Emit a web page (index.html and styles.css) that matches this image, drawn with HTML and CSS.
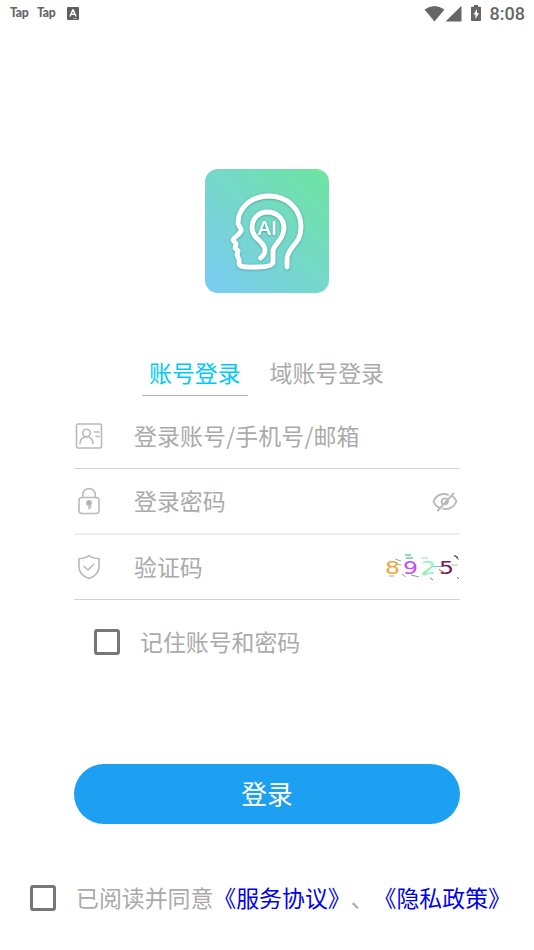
FILE: index.html
```html
<!DOCTYPE html>
<html lang="zh-CN">
<head>
<meta charset="utf-8">
<title>登录</title>
<link rel="stylesheet" href="styles.css">
</head>
<body>
<div class="screen">
  <header class="status">
    <div class="status-left">
      <span>Tap</span><span>Tap</span>
      <svg class="a-icon" width="12" height="13" viewBox="0 0 12 13"><rect width="12" height="13" rx="1" fill="#5f5f5f"/><path d="M3 9.500 5.700 3h.6L9 9.500M4 7.300h4" fill="none" stroke="#fff" stroke-width="1.400"/><path d="M6 11.500h4" stroke="#bbb" stroke-width=".8"/></svg>
    </div>
    <div class="status-right">
      <svg width="52" height="18" viewBox="0 0 52 18" fill="#666"><path d="M.5 4.500Q10.500-2.500 20.500 4.500L10.500 16.500Z"/><path d="M37.500.8V16.500H21.500Z"/></svg>
      <svg class="battery" width="10" height="17" viewBox="0 0 10 17"><path d="M3 0h4v1.700h2q1 0 1 1V15q0 1-1 1H1q-1 0-1-1V2.700q0-1 1-1h2Z" fill="#666"/><path d="M6 4 2.500 9.500h2V14L8 8H6Z" fill="#fff"/></svg>
      <span class="clock">8:08</span>
    </div>
  </header>

  <svg class="logo" width="124" height="124" viewBox="0 0 124 124">
    <defs>
      <linearGradient id="bg" x1="0" y1="1" x2="1" y2="0"><stop offset="0" stop-color="#79cbf4"/><stop offset=".5" stop-color="#76d8cb"/><stop offset="1" stop-color="#6ce5a0"/></linearGradient>
      <filter id="shade" x="-20%" y="-20%" width="140%" height="140%"><feDropShadow dx="0" dy=".5" stdDeviation="1.200" flood-color="#28786f" flood-opacity=".65"/></filter>
    </defs>
    <rect width="124" height="124" rx="13" fill="url(#bg)"/>
    <g fill="none" stroke="#fff" stroke-linecap="round" stroke-linejoin="round" filter="url(#shade)">
      <path stroke-width="4.800" d="M82 98V90C82 78 96 76 96 58C96 39 81 27 64 27C46 27 33 39 33 54C33 57 37 59 36 62C35 65 28 69 28 71C28 73 31 73 31 75L30 79L33 82L32 86C33 89 35 90 34 94C34 99 43 98 51 98C60 98 68 97 68 93V82C68 76 79 71 79 59C79 49 71 43 62.500 43C53 43 47 50 47 59C47 70 60 72 60 81C60 85 58 87 55.500 89"/>
    </g>
    <text x="62.500" y="65.500" text-anchor="middle" class="logo-text" filter="url(#shade)">AI</text>
  </svg>

  <nav class="tabs">
    <a class="tab active">账号登录</a>
    <a class="tab">域账号登录</a>
  </nav>

  <form class="form">
    <div class="row">
      <svg class="icon" width="30" height="30" viewBox="0 0 30 30"><rect x="2.500" y="3" width="25" height="24" rx="1.500"/><circle cx="12.500" cy="12" r="3.800"/><path d="M6 22.500C6 13.500 19 13.500 19 22.500M20.500 11H25M22 15.500h3"/></svg>
      <span class="label account">登录账号/手机号/邮箱</span>
    </div>
    <div class="row light">
      <svg class="icon" width="30" height="30" viewBox="0 0 30 30"><rect x="5" y="11.500" width="20" height="16" rx="3"/><path d="M8.700 11.500V9C8.700 .5 21.300 .5 21.300 9V11.500"/><circle cx="15" cy="17" r="2.200" fill="#aaa"/><path d="M15.300 18v5M15 21h2"/></svg>
      <span class="label">登录密码</span>
      <svg class="eye" width="28" height="24" viewBox="0 0 28 24"><path d="M17 4.700C9 2.500 4.500 7 2.500 11.500C3.500 14 5.500 16.500 8 17.500M21.500 6.500C24 8 25 10 25.500 11.500C23 17.500 17.500 20 12 18.700M22.500 3.500 7 20.500M15.500 8.600C11 7.500 9.500 11.500 11.500 14M17 11C17 13 16 14 14.500 14.300"/></svg>
    </div>
    <div class="row">
      <svg class="icon" width="30" height="30" viewBox="0 0 30 30"><path d="M15 3.500C12 6 8 6.500 5 6.500V15C5 21 9.500 24.500 15 26.500C20.500 24.500 25 21 25 15V6.500C22 6.500 18 6 15 3.500ZM10 14.500 14 18 20 12"/></svg>
      <span class="label">验证码</span>
      <svg class="captcha" width="76" height="28" viewBox="0 0 76 28" fill="none">
        <path d="M10 5l6 2M12 10l4 1M4 22h5" stroke="#6fc594"/><path d="M20 1h6M21 4h7" stroke="#69cb96" stroke-width="1.300"/><path d="M36 4h7M37 20l5 1" stroke="#8ee3be"/><path d="M17 20l4 3" stroke="#80a6ee"/><path d="M26 21l8 2" stroke="#68b39d"/><path d="M45 24l3 2" stroke="#a16be0"/><path d="M48 12.500h9" stroke="#65cad7"/><path d="M54 15.500l5 3" stroke="#a15a27"/><path d="M66 11h7" stroke="#9bd76e"/><path d="M69 1.500l4 2" stroke="#35298b" stroke-width="1.300"/><path d="M71 3.500l3 2M72 23l2 2" stroke="#647e8d"/>
        <g class="digits"><text x="0" y="20" textLength="15" lengthAdjust="spacingAndGlyphs" fill="#f4a340">8</text><text x="18" y="20" textLength="15" lengthAdjust="spacingAndGlyphs" fill="#c450ed">9</text><text x="36" y="20" textLength="15" lengthAdjust="spacingAndGlyphs" fill="#91f2b5">2</text><text x="54" y="20" textLength="15" lengthAdjust="spacingAndGlyphs" fill="#70204d">5</text></g>
      </svg>
    </div>
    <label class="remember"><span class="box"></span><span class="caption">记住账号和密码</span></label>
    <button class="submit" type="button">登录</button>
  </form>

  <footer class="agree"><span class="box"></span><span class="terms caption">已阅读并同意<a>《服务协议》</a>、<a>《隐私政策》</a></span></footer>
</div>
</body>
</html>
```

FILE: styles.css
```css
* { box-sizing: border-box; }
body {
  margin: 0;
  background: #fff;
  color: #aaa;
  font: 22.9px/34px "Noto Sans CJK SC", sans-serif;
  text-spacing-trim: space-all;
}
.screen { height: 950px; overflow: hidden; display: flex; flex-direction: column; }
.status {
  height: 27px;
  padding: 0 9px 0 10px;
  display: flex;
  justify-content: space-between;
  align-items: center;
  color: #666;
}
.status-left { display: flex; align-items: center; gap: 7px; font: 900 12.2px/24px Lato, sans-serif; letter-spacing: -.2px; }
.status-left span { width: 20px; padding-bottom: 2px; }
.a-icon { margin-left: 3px; }
.status-right { display: flex; align-items: center; }
.battery { margin-right: 9px; }
.status-right svg:first-child { margin-right: -5px; }
.clock { font: 500 18px/26px Roboto, sans-serif; }
.logo { flex: none; margin: 142px auto 0 205px; }
.logo-text { font: 600 20px "Open Sans", sans-serif; fill: #fff; }
.tabs { display: flex; margin: 61px 0 0 142px; gap: 15px; height: 42px; }
.tab { padding: 1px 7px 0; height: 42px; }
.active { color: #00c8ff; border-bottom: 1px solid #b4b4b4; }
.form { margin: 7px 74px 0; display: flex; flex-direction: column; }
.row { height: 65.5px; display: flex; align-items: center; border-bottom: 1px solid #d3d3d3; }
.row .icon { margin-top: 1px; }
.row:first-child { height: 66px; }
.light { border-bottom: 2px solid #eee; }
.row:nth-child(3) { height: 65px; }
.icon { fill: none; stroke: #b9b9b9; stroke-width: 1.6; stroke-linecap: round; stroke-linejoin: round; }
.label { margin-left: 30px; padding-bottom: 2px; }
.account { letter-spacing: .15px; }
.eye { margin-left: auto; margin-right: 1px; margin-top: 2px; fill: none; stroke: #b9b9b9; stroke-width: 1.9; stroke-linecap: round; }
.captcha { margin-left: auto; margin-right: -1px; margin-top: 3px; }
.digits { font: 18px "DejaVu Sans", sans-serif; }
.box { flex: none; width: 26px; height: 26px; border: 3px solid #777; border-radius: 3px; }
.remember { margin: 25px 0 0 20px; display: flex; align-items: center; gap: 20px; height: 34px; }
.caption { padding-bottom: 1px; }
.submit {
  margin: 105px 0 0;
  height: 60px;
  padding: 0 0 2px;
  border: 0;
  border-radius: 30px;
  background: #1da0f2;
  color: #fff;
  font: 25.7px/38px "Noto Sans CJK SC", sans-serif;
}
.agree { margin: 57px 0 0 30px; display: flex; align-items: center; gap: 20px; height: 34px; white-space: nowrap; }
.terms a { color: #0000f0; }
```
